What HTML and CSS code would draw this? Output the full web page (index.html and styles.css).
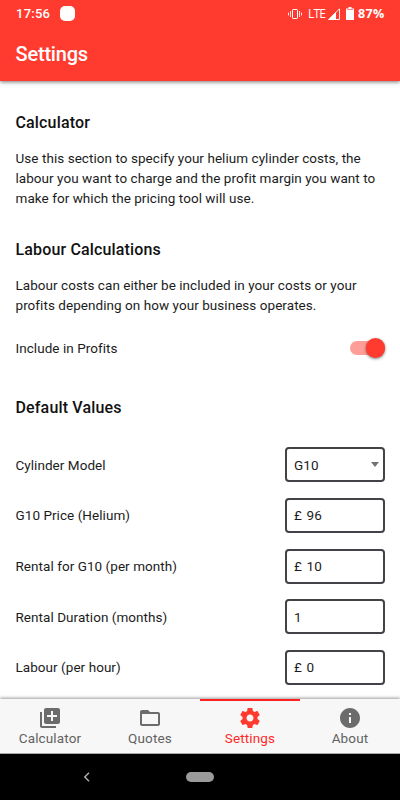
FILE: index.html
```html
<!DOCTYPE html>
<html lang="en">
<head>
<meta charset="utf-8">
<title>Settings</title>
<link rel="stylesheet" href="styles.css">
</head>
<body>
<div class="screen">
  <header class="header">
    <div class="status">
      <span class="time">17:56</span><span class="notification"></span>
      <svg class="vibrate" width="14" height="12" viewBox="0 0 14 12" fill="none" stroke="#fff"><rect x="4.5" y="1.5" width="5" height="9" rx=".7"/><path d="M2.5 3v6M.5 4.5v3M11.500 3v6M13.500 4.500v3" stroke-opacity=".85"/></svg>
      <span class="lte">LTE</span>
      <svg class="signal" width="12" height="12" viewBox="0 0 12 12"><path d="M.8 11.500H11.500V.8z" fill="none" stroke="#fff" stroke-opacity=".9"/><path d="M0 12 8 4v8z" fill="#fff"/></svg>
      <svg class="battery" width="8" height="13" viewBox="0 0 8 13"><path d="M0 1.500h2.500V0h3v1.500H8V13H0z" fill="#fff"/><path d="M1 2.500h6" stroke="#ff3b30" stroke-opacity=".6"/></svg>
      <span class="percent">87%</span>
    </div>
    <h1 class="title">Settings</h1>
  </header>
  <main class="content">
    <section class="section">
      <h2 class="heading">Calculator</h2>
      <p class="text">Use this section to specify your helium cylinder costs, the<br>labour you want to charge and the profit margin you want to<br>make for which the pricing tool will use.</p>
    </section>
    <section class="section">
      <h2 class="heading">Labour Calculations</h2>
      <p class="text">Labour costs can either be included in your costs or your<br>profits depending on how your business operates.</p>
      <div class="toggle-row"><span>Include in Profits</span><span class="switch"><span class="thumb"></span></span></div>
    </section>
    <section class="section defaults">
      <h2 class="heading">Default Values</h2>
      <div class="fields">
        <div class="field"><span>Cylinder Model</span><div class="box">G10<span class="caret"></span></div></div>
        <div class="field"><span>G10 Price (Helium)</span><div class="box"><span class="pound">£</span>96</div></div>
        <div class="field"><span>Rental for G10 (per month)</span><div class="box"><span class="pound">£</span>10</div></div>
        <div class="field"><span>Rental Duration (months)</span><div class="box">1</div></div>
        <div class="field"><span>Labour (per hour)</span><div class="box"><span class="pound">£</span>0</div></div>
      </div>
    </section>
  </main>
  <nav class="tabs">
    <div class="tab"><svg class="icon" viewBox="0 0 24 24"><path d="M4 6H2v14c0 1.100.9 2 2 2h14v-2H4V6zm16-4H8c-1.100 0-2 .9-2 2v12c0 1.100.9 2 2 2h12c1.100 0 2-.9 2-2V4c0-1.100-.9-2-2-2zm-1 9h-4v4h-2v-4H9V9h4V5h2v4h4v2z"/></svg><span>Calculator</span></div>
    <div class="tab"><svg class="icon" viewBox="0 0 24 24"><path d="M20 6h-8l-2-2H4c-1.100 0-2 .9-2 2v12c0 1.100.9 2 2 2h16c1.100 0 2-.9 2-2V8c0-1.100-.9-2-2-2zm0 12H4V8h16v10z"/></svg><span>Quotes</span></div>
    <div class="tab active"><svg class="icon" viewBox="0 0 24 24"><path d="M19.430 12.980c.04-.32.07-.64.07-.98s-.03-.66-.07-.98l2.110-1.650c.19-.15.24-.42.12-.64l-2-3.460c-.12-.22-.39-.3-.61-.22l-2.490 1c-.52-.4-1.080-.73-1.690-.98l-.38-2.650C14.460 2.180 14.250 2 14 2h-4c-.25 0-.46.18-.49.42l-.38 2.650c-.61.25-1.170.59-1.690.98l-2.490-1c-.23-.09-.49 0-.61.22l-2 3.460c-.13.22-.07.49.12.64l2.110 1.650c-.04.32-.07.65-.07.98s.03.66.07.98l-2.110 1.650c-.19.15-.24.42-.12.64l2 3.460c.12.22.39.3.61.22l2.490-1c.52.4 1.080.73 1.690.98l.38 2.650c.03.24.24.42.49.42h4c.25 0 .46-.18.49-.42l.38-2.650c.61-.25 1.170-.59 1.690-.98l2.490 1c.23.09.49 0 .61-.22l2-3.460c.12-.22.07-.49-.12-.64l-2.110-1.650zM12 15.500c-1.930 0-3.500-1.570-3.500-3.500s1.570-3.500 3.500-3.500 3.500 1.570 3.500 3.500-1.570 3.500-3.500 3.500z"/></svg><span>Settings</span></div>
    <div class="tab"><svg class="icon" viewBox="0 0 24 24"><path d="M12 2C6.480 2 2 6.480 2 12s4.480 10 10 10 10-4.480 10-10S17.520 2 12 2zm1 15h-2v-6h2v6zm0-8h-2V7h2v2z"/></svg><span>About</span></div>
  </nav>
  <footer class="system">
    <svg class="back" width="8" height="10" viewBox="0 0 8 10"><path d="M6 .8 1.800 5 6 9.200" fill="none" stroke="#aaa" stroke-width="1.500"/></svg>
    <span class="home"></span>
  </footer>
</div>
</body>
</html>
```
FILE: styles.css
```css
* { box-sizing: border-box; }
body { margin: 0; background: #fff; color: #1c1c1c; font: 13.5px/20.3px Roboto, "Liberation Sans", sans-serif; }
h1, h2, p { margin: 0; }
.screen { display: flex; flex-direction: column; width: 400px; height: 800px; overflow: hidden; }
.header { height: 81px; flex: none; background: #ff3b30; color: #fff; box-shadow: 0 1px 4px rgba(0,0,0,.55); }
.status { display: flex; align-items: center; height: 27px; padding: 0 15px 0 16px; }
.time { width: 34px; font: 500 13px/16px Roboto, sans-serif; letter-spacing: .25px; white-space: nowrap; }
.notification { width: 15px; height: 15px; margin-left: 10px; border-radius: 5px; background: #fff; }
.vibrate { margin-left: auto; }
.lte { width: 17px; margin-left: 6px; font: 12px/16px "Open Sans", sans-serif; letter-spacing: -.8px; white-space: nowrap; }
.signal { margin-left: 3px; }
.battery { margin-left: 6px; }
.percent { width: 27px; margin-left: 4px; font: 700 12.500px/16px "Open Sans", sans-serif; letter-spacing: .4px; white-space: nowrap; }
.title { padding-left: 15.500px; font-size: 20px; line-height: 54px; font-weight: 500; letter-spacing: -.2px; }
.content { flex: 1; min-height: 0; overflow: hidden; padding: 32px 15px 0 15.500px; letter-spacing: .05px; }
.section { margin-bottom: 31.700px; }
.heading { margin-bottom: 14.500px; color: #111; font-size: 16px; line-height: 20px; font-weight: 500; letter-spacing: .15px; }
.text { white-space: nowrap; }
.toggle-row { display: flex; align-items: center; justify-content: space-between; height: 20px; margin-top: 23px; }
.switch { display: flex; align-items: center; justify-content: flex-end; width: 35px; height: 14px; border-radius: 7px; background: #ff9d98; }
.thumb { flex: none; width: 19.500px; height: 19.500px; border-radius: 50%; background: #ff3b30; box-shadow: 0 1px 3px rgba(0,0,0,.5); }
.defaults { padding-top: 7.800px; }
.fields { display: flex; flex-direction: column; gap: 15.600px; padding-top: 15.300px; }
.field { display: flex; align-items: center; justify-content: space-between; height: 35px; }
.box { display: flex; align-items: center; width: 100px; height: 35px; padding: 0 4px 0 7px; border: 2px solid #424346; border-radius: 4px; }
.pound { width: 12.500px; }
.caret { margin-left: auto; border: 4px solid transparent; border-top: 5px solid #727272; border-bottom: 0; }
.tabs { position: relative; display: flex; flex: none; height: 55px; background: #f7f7f7; border-bottom: 1px solid #aaa; box-shadow: 0 -1px 3px rgba(0,0,0,.4); }
.tab { display: flex; flex: 1; flex-direction: column; align-items: center; padding-top: 5px; border-top: 2px solid transparent; color: #626262; font-size: 13.500px; line-height: 17px; letter-spacing: .13px; }
.icon { width: 24px; height: 24px; fill: #6c6c6c; }
.active { border-top-color: #ff2020; color: #ff2828; }
.active .icon { fill: #ff3b30; }
.system { display: grid; grid-template-columns: 83px 103px 28px; align-items: center; height: 46px; flex: none; background: #000; }
.back { grid-column: 2; }
.home { width: 28px; height: 10px; border-radius: 5px; background: #9b9b9b; }
```
